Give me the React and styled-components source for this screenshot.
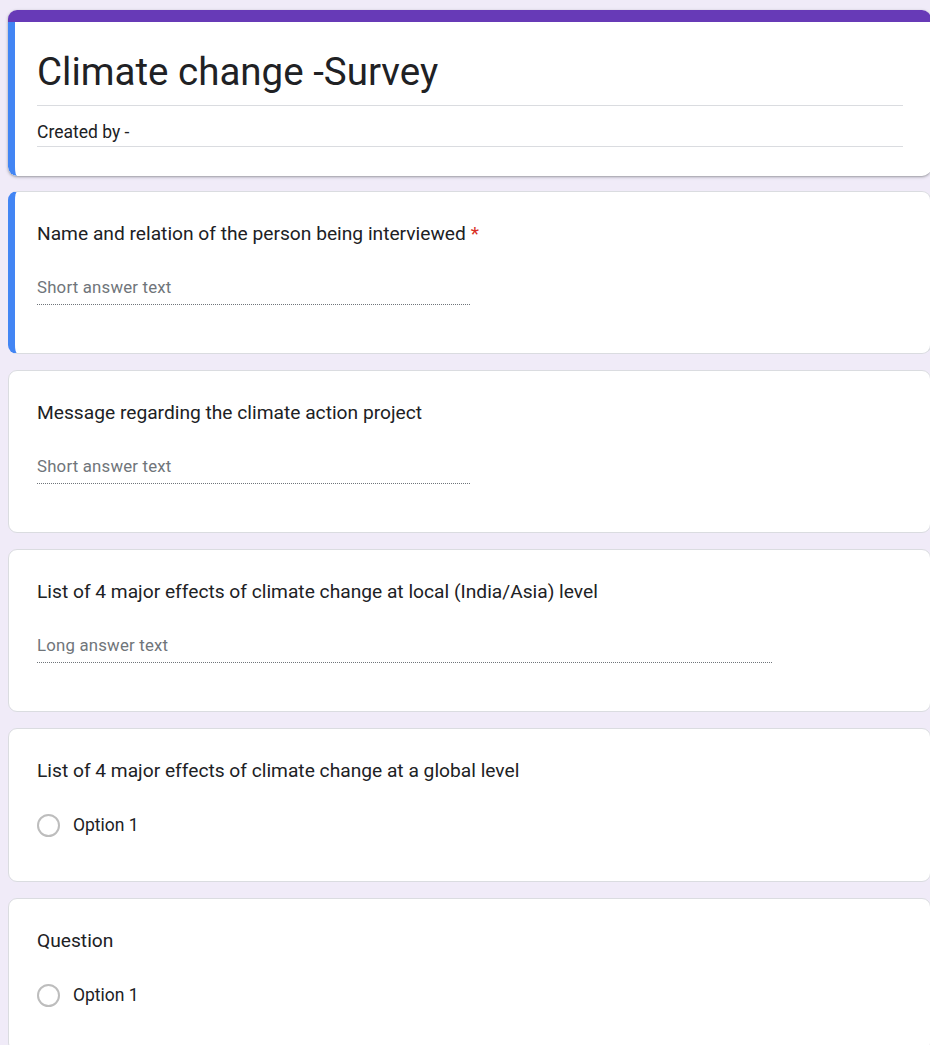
import React from 'react'
import styled, { createGlobalStyle } from 'styled-components'

const GlobalStyle = createGlobalStyle`
    html, body {
        margin: 0;
        padding: 0;
        background: #f0ebf8;
        font-family: Roboto, "Liberation Sans", Arial, sans-serif;
        color: #202124;
        overflow: hidden;
    }
`

const questions = [
    { title: 'Name and relation of the person being interviewed', type: 'short', required: true, active: true },
    { title: 'Message regarding the climate action project', type: 'short' },
    { title: 'List of 4 major effects of climate change at local (India/Asia) level', type: 'long' },
    { title: 'List of 4 major effects of climate change at a global level', type: 'radio' },
    { title: 'Question', type: 'radio' },
]

function App() {
    return (
        <>
            <GlobalStyle />
            <Page>
                <HeaderCard>
                    <TopStrip />
                    <HeaderBody>
                        <Title>Climate change -Survey</Title>
                        <Description>Created by -</Description>
                    </HeaderBody>
                </HeaderCard>

                {questions.map((q, i) => (
                    <Card key={i} active={q.active} compact={q.type === 'radio'}>
                        <Question>
                            {q.title}
                            {q.required && <Required>*</Required>}
                        </Question>
                        {q.type === 'short' && <Answer>Short answer text</Answer>}
                        {q.type === 'long' && <Answer long>Long answer text</Answer>}
                        {q.type === 'radio' && (
                            <OptionRow>
                                <Radio />
                                <OptionLabel>Option 1</OptionLabel>
                            </OptionRow>
                        )}
                    </Card>
                ))}
            </Page>
        </>
    )
}

export default App

const Page = styled.div`
    display: flex;
    flex-direction: column;
    gap: 16px;
    padding: 10px 0 0 8px;
    width: 923px;
`

const HeaderCard = styled.div`
    background: #fff;
    border-radius: 9px;
    box-shadow: 0 1px 2px rgba(60, 64, 67, 0.35), 0 1px 3px 1px rgba(60, 64, 67, 0.12);
    overflow: hidden;
    display: flex;
    flex-direction: column;
    margin-bottom: -1px;
`

const TopStrip = styled.div`
    height: 12px;
    background: #673ab7;
`

const HeaderBody = styled.div`
    border-left: 7px solid #4285f4;
    border-bottom-left-radius: 9px;
    padding: 26px 28px 29px 22px;
`

const Title = styled.div`
    font-size: 38.5px;
    line-height: 48px;
    font-weight: 400;
    color: #202124;
    padding-bottom: 9px;
    border-bottom: 1px solid #dadce0;
`

const Description = styled.div`
    margin-top: 16px;
    font-size: 17.5px;
    line-height: 20px;
    color: #202124;
    padding-bottom: 4px;
    border-bottom: 1px solid #dadce0;
`

const Card = styled.div`
    background: #fff;
    border: 1px solid #dadce0;
    border-radius: 9px;
    padding: 28px 28px ${p => (p.compact ? '44px' : '48px')} 28px;
    border-left: ${p => (p.active ? '7px solid #4285f4' : '1px solid #dadce0')};
    padding-left: ${p => (p.active ? '22px' : '28px')};
    display: flex;
    flex-direction: column;
`

const Question = styled.div`
    font-size: 19.2px;
    line-height: 28px;
    letter-spacing: 0;
    color: #202124;
`

const Required = styled.span`
    color: #d93025;
    margin-left: 5px;
`

const Answer = styled.div`
    margin-top: 29px;
    width: ${p => (p.long ? '85%' : '50%')};
    font-size: 16.8px;
    line-height: 20px;
    letter-spacing: 0.2px;
    color: #70757a;
    padding-bottom: 7px;
    border-bottom: 1px dotted #70757a;
`

const OptionRow = styled.div`
    margin-top: 28px;
    display: flex;
    align-items: center;
    gap: 13px;
    height: 24px;
`

const Radio = styled.span`
    width: 19px;
    height: 19px;
    border: 2px solid #bdbdbd;
    border-radius: 50%;
    box-sizing: content-box;
    flex: none;
`

const OptionLabel = styled.span`
    font-size: 17.5px;
    line-height: 20px;
    color: #202124;
`
